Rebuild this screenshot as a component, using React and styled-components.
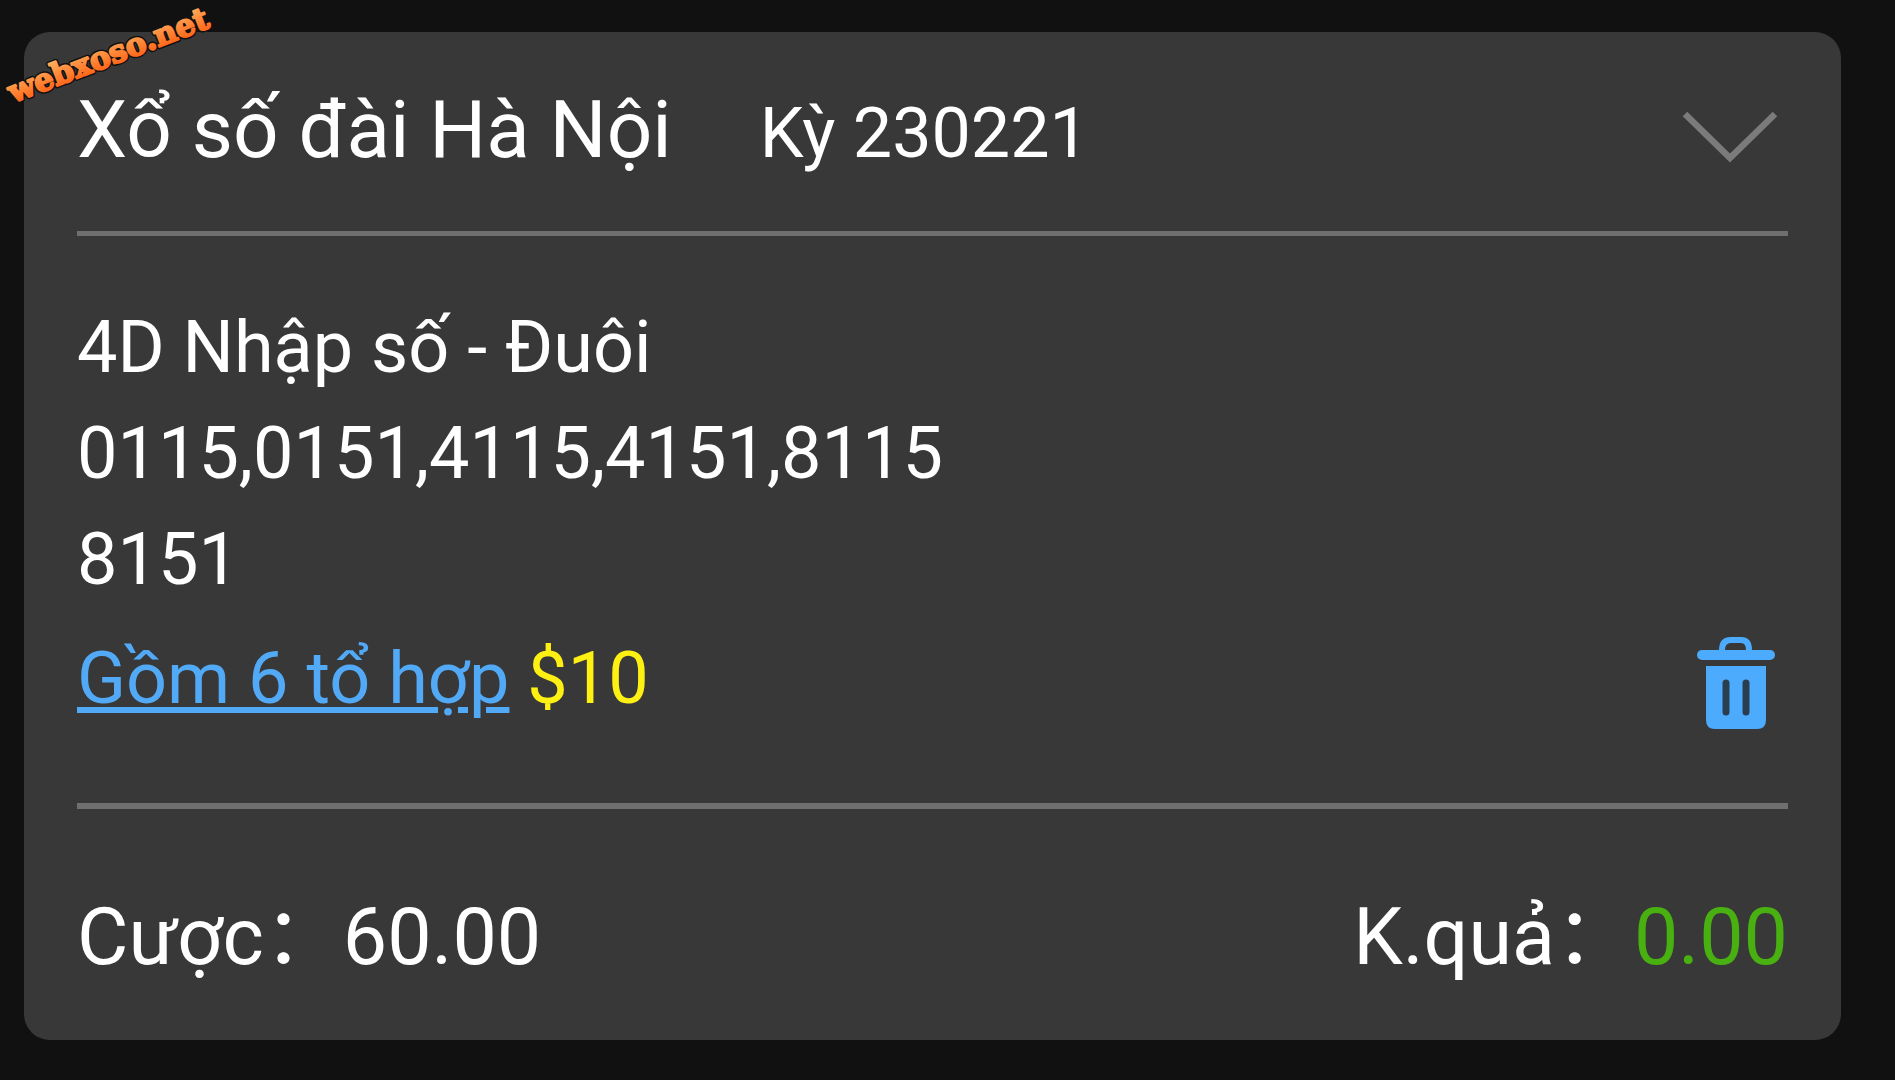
/**
 * BetTicketPage
 *
 * Shows a single lottery ticket: draw, picked numbers, stake and result
 */

import React, { useState } from 'react';
import styled, { createGlobalStyle } from 'styled-components';

const GlobalStyle = createGlobalStyle`
  body {
    margin: 0;
    background: #111;
    color: #fff;
    font-family: Roboto, "Noto Sans CJK SC", sans-serif;
  }
`;

const Page = styled.main`
  position: relative;
  padding: 32px 54px 39px 24px;
`;

const Watermark = styled.svg`
  position: absolute;
  top: 0;
  left: 0;
  pointer-events: none;
`;

const WatermarkText = styled.text`
  font-family: "DejaVu Serif", serif;
  font-size: 31px;
  font-weight: bold;
  stroke-linejoin: round;
`;

const Card = styled.article`
  padding: 0 53px;
  border-radius: 26px;
  background: #383838;
`;

const Header = styled.header`
  display: flex;
  align-items: baseline;
  padding: 45px 0;
  border-bottom: 5px solid #6f6f6f;
  line-height: 106px;
`;

const Title = styled.h1`
  margin: 0;
  font-size: 80px;
  font-weight: 400;
`;

const Draw = styled.span`
  margin-left: 88px;
  font-size: 70px;
`;

const IconButton = styled.button`
  display: flex;
  margin-left: auto;
  padding: 0;
  border: 0;
  background: none;
  color: ${({ $color }) => $color};
  cursor: pointer;
  align-self: center;
  margin-right: ${({ $inset }) => $inset}px;
`;

const Body = styled.section`
  padding: 59px 0 71px;
  border-bottom: 6px solid #6f6f6f;
  font-size: 72px;
  line-height: 106px;
`;

const Line = styled.p`
  margin: 0;
`;

const ComboRow = styled.div`
  display: flex;
  align-items: center;
  margin-top: 13px;
`;

const ComboLink = styled.a`
  color: #52a9f6;
  text-decoration: underline;
  text-decoration-thickness: 6px;
  text-underline-offset: 4px;
`;

const Price = styled.span`
  color: #fff014;
`;

const Footer = styled.footer`
  display: flex;
  justify-content: space-between;
  padding: 75px 0 50px;
  font-size: 79px;
  line-height: 106px;
`;

const Result = styled.span`
  color: #48b010;
`;

const numbers = ['0115,0151,4115,4151,8115', '8151'];

const ChevronIcon = () => (
  <svg width="96" height="66" viewBox="0 -12 96 66" fill="none" aria-hidden="true">
    <path d="M3 3 L48 47 L93 3" stroke="currentColor" strokeWidth="6.5" />
  </svg>
);

const TrashIcon = () => (
  <svg width="80" height="99" viewBox="0 -6 80 99" fill="none" aria-hidden="true">
    <path d="M26 17 V14 Q26 4 35 4 H45 Q53 4 53 14 V17" stroke="currentColor" strokeWidth="6" />
    <rect x="1" y="14" width="78" height="10" rx="5" fill="currentColor" />
    <path d="M10 30 H70 V84 Q70 93 61 93 H19 Q10 93 10 84 Z" fill="currentColor" />
    <path d="M30 47 V76 M50 47 V76" stroke="#2b3e50" strokeWidth="7" strokeLinecap="round" />
  </svg>
);

const SiteMark = () => (
  <Watermark width="230" height="120" viewBox="0 0 230 120" role="img" aria-label="webxoso.net">
    <defs>
      <linearGradient id="mark" gradientUnits="userSpaceOnUse" x1="0" y1="-24" x2="0" y2="0">
        <stop offset="0" stopColor="#ffad5c" />
        <stop offset="1" stopColor="#ff6a1c" />
      </linearGradient>
    </defs>
    <g transform="translate(13 103) rotate(-21)">
      <WatermarkText fill="#111" stroke="#111" strokeWidth="5">webxoso.net</WatermarkText>
      <WatermarkText fill="url(#mark)" stroke="url(#mark)" strokeWidth="2" aria-hidden="true">webxoso.net</WatermarkText>
    </g>
  </Watermark>
);

const App = () => {
  const [open, setOpen] = useState(true);
  const [removed, setRemoved] = useState(false);

  return (
    <Page>
      <GlobalStyle />
      <Card>
        <Header>
          <Title>Xổ số đài Hà Nội</Title>
          <Draw>Kỳ 230221</Draw>
          <IconButton
            type="button"
            aria-label="Thu gọn"
            aria-expanded={open}
            $color="#7b7b7b"
            $inset={10}
            onClick={() => setOpen(!open)}
          >
            <ChevronIcon />
          </IconButton>
        </Header>
        {open && !removed && (
          <Body>
            <Line>4D Nhập số - Đuôi</Line>
            {numbers.map((line) => <Line key={line}>{line}</Line>)}
            <ComboRow>
              <Line>
                <ComboLink href="#to-hop">Gồm 6 tổ hợp</ComboLink> <Price>$10</Price>
              </Line>
              <IconButton
                type="button"
                aria-label="Xóa"
                $color="#4dabfd"
                $inset={12}
                onClick={() => setRemoved(true)}
              >
                <TrashIcon />
              </IconButton>
            </ComboRow>
          </Body>
        )}
        <Footer>
          <span>Cược：60.00</span>
          <span>K.quả：<Result>0.00</Result></span>
        </Footer>
      </Card>
      <SiteMark />
    </Page>
  );
};

export default App;
